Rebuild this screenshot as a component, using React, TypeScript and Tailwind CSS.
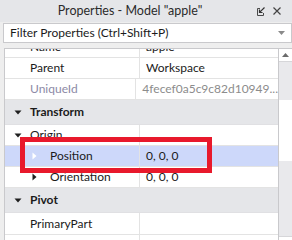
import React from 'react';

type Row = {
  kind: 'prop' | 'header';
  name: string;
  value?: string;
  depth?: number;
  arrow?: 'down' | 'right' | 'rightWhite';
  muted?: boolean;
  selected?: boolean;
  tall?: boolean;
};

const rows: Row[] = [
  { kind: 'prop', name: 'Name', value: 'apple' },
  { kind: 'prop', name: 'Parent', value: 'Workspace' },
  { kind: 'prop', name: 'UniqueId', value: '4fecef0a5c9c82d10949...', muted: true },
  { kind: 'header', name: 'Transform' },
  { kind: 'prop', name: 'Origin', arrow: 'down' },
  { kind: 'prop', name: 'Position', value: '0, 0, 0', depth: 1, arrow: 'rightWhite', selected: true },
  { kind: 'prop', name: 'Orientation', value: '0, 0, 0', depth: 1, arrow: 'right' },
  { kind: 'header', name: 'Pivot' },
  { kind: 'prop', name: 'PrimaryPart', value: '', tall: true },
  { kind: 'prop', name: '', value: '' },
];

function Arrow({ type }: { type: 'down' | 'right' | 'rightWhite' }) {
  if (type === 'down') {
    return (
      <svg width="8" height="5" viewBox="0 0 8 5" className="block">
        <path d="M0.5 0.5 L7.5 0.5 L4 4.5 Z" fill="#1f1f1f" />
      </svg>
    );
  }
  return (
    <svg width="5" height="8" viewBox="0 0 5 8" className="block">
      <path d="M0.5 0.5 L4.5 4 L0.5 7.5 Z" fill={type === 'rightWhite' ? '#ffffff' : '#1f1f1f'} />
    </svg>
  );
}

function PropertyRow({ row }: { row: Row }) {
  if (row.kind === 'header') {
    return (
      <div className="h-[25px] flex items-center bg-[#e5e6e9] border-b border-[#e0e0e3]">
        <div className="w-[24px] flex justify-center pl-[2px]">
          <Arrow type="down" />
        </div>
        <span className="pl-[1px] font-bold text-[#1b1b1b]">{row.name}</span>
      </div>
    );
  }
  const depth = row.depth ?? 0;
  return (
    <div
      className={
        (row.tall ? 'h-[22px] ' : 'h-[21px] ') +
        'flex border-b border-[#e3e3e3] ' +
        (row.selected ? 'bg-[#cdd8fa]' : 'bg-white')
      }
    >
      <div className="w-[135px] flex items-center border-r border-[#e3e3e3]">
        <div className={depth === 1 ? 'w-[44px] flex justify-end pr-[12px]' : 'w-[24px] flex justify-center pl-[2px]'}>
          {row.arrow && <Arrow type={row.arrow} />}
        </div>
        <span className={'pl-[1px] ' + (row.muted ? 'text-[#8d8aa6]' : 'text-[#1b1b1b]')}>{row.name}</span>
      </div>
      <div className={'flex-1 flex items-center pl-[6px] ' + (row.muted ? 'text-[#8c8c8c]' : 'text-[#1b1b1b]')}>
        {row.value}
      </div>
    </div>
  );
}

export default function App() {
  return (
    <div className="w-[292px] h-[240px] bg-[#eeeeee] overflow-hidden relative font-['Lato',sans-serif] text-[12px] leading-none">
      {/* title bar */}
      <div className="h-[22px] flex items-center bg-[#e5e6e9]">
        <div className="flex-1 text-center text-[12.5px] text-[#2b2b2b] pl-[8px]">Properties - Model "apple"</div>
        <div className="w-[40px] flex items-center gap-[8px] pl-[4px]">
          <svg width="9" height="9" viewBox="0 0 9 9" className="block">
            <path d="M4 1.5 H1.5 V8.5 H7.5 V6" fill="none" stroke="#4a4a4a" strokeWidth="1" />
            <path d="M8.5 0.5 L3.8 5.2 M3.5 2.5 V5.5 H6.5" fill="none" stroke="#333" strokeWidth="1.2" />
          </svg>
          <svg width="8" height="8" viewBox="0 0 8 8" className="block">
            <path d="M0.5 0.5 L7.5 7.5 M7.5 0.5 L0.5 7.5" stroke="#444" strokeWidth="1.2" />
          </svg>
        </div>
      </div>

      {/* filter */}
      <div className="mt-[1px] ml-[3px] h-[20px] bg-white border border-[#c9c9cc] flex items-center pl-[6px] pr-[6px]">
        <span className="flex-1 text-[#1b1b1b]">Filter Properties (Ctrl+Shift+P)</span>
        <svg width="7" height="4" viewBox="0 0 7 4" className="block">
          <path d="M0 0 H7 L3.5 4 Z" fill="#8a8a8a" />
        </svg>
      </div>

      {/* property grid */}
      <div className="mt-[5px] ml-[4px] h-[200px] flex border-t border-l border-[#c9c9cc] bg-white">
        <div className="flex-1 overflow-hidden">
          <div className="-mt-[12px]">
            {rows.map((r, i) => (
              <PropertyRow key={i} row={r} />
            ))}
          </div>
        </div>
        <div className="w-[14px] flex flex-col border-l border-[#c9c9cc]">
          <div className="h-[13px] flex items-center justify-center bg-white border-b border-[#d6d6d9]">
            <svg width="7" height="4" viewBox="0 0 7 4" className="block">
              <path d="M0 4 H7 L3.5 0 Z" fill="#6b6b6b" />
            </svg>
          </div>
          <div className="h-[38px] bg-[#e9e9ec]" />
          <div className="h-[61px] bg-white" />
          <div className="flex-1 bg-[#e9e9ec]" />
          <div className="h-[12px] flex items-center justify-center bg-white border-t border-[#d6d6d9]">
            <svg width="7" height="4" viewBox="0 0 7 4" className="block">
              <path d="M0 0 H7 L3.5 4 Z" fill="#6b6b6b" />
            </svg>
          </div>
        </div>
      </div>

      {/* annotation box */}
      <div className="absolute left-[20px] top-[137px] w-[192px] h-[36px] border-[5px] border-[#e8192c]" />
    </div>
  );
}
